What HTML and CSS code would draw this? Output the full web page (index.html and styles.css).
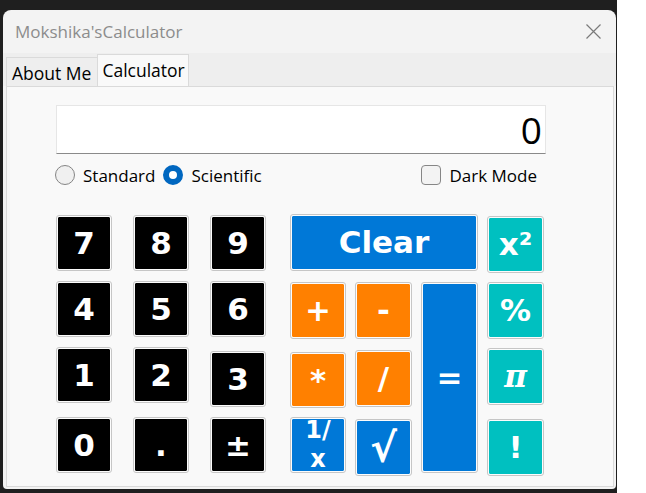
FILE: index.html
```html
<!DOCTYPE html>
<html>
<head>
<meta charset="utf-8">
<link rel="stylesheet" href="styles.css">
</head>
<body>
<div class="desktop">
  <div class="window">
    <div class="titlebar">
      <span class="title">Mokshika'sCalculator</span>
      <svg class="close" width="15" height="15" viewBox="0 0 15 15"><path d="M0.5 0.5 L14.5 14.5 M14.5 0.5 L0.5 14.5" stroke="#7a7a7a" stroke-width="1.2" fill="none"/></svg>
    </div>
    <div class="tabstrip">
      <div class="tab">About Me</div>
      <div class="tab active">Calculator</div>
    </div>
    <div class="panel">
      <div class="display">0</div>
      <div class="options">
        <label class="opt"><span class="radio"></span>Standard</label>
        <label class="opt"><span class="radio checked"></span>Scientific</label>
        <label class="opt dark"><span class="check"></span>Dark Mode</label>
      </div>
      <div class="keypad">
        <div class="digits">
          <div class="btn black">7</div>
          <div class="btn black">8</div>
          <div class="btn black">9</div>
          <div class="btn black">4</div>
          <div class="btn black">5</div>
          <div class="btn black">6</div>
          <div class="btn black">1</div>
          <div class="btn black">2</div>
          <div class="btn black low">3</div>
          <div class="btn black">0</div>
          <div class="btn black">.</div>
          <div class="btn black">±</div>
        </div>
        <div class="ops">
          <div class="btn blue clear">Clear</div>
          <div class="btn teal c4 r1 n2">x²</div>
          <div class="btn orange c1 r2">+</div>
          <div class="btn orange c2 r2">-</div>
          <div class="btn blue equals">=</div>
          <div class="btn teal c4 r2">%</div>
          <div class="btn orange c1 r3 n4 h56">*</div>
          <div class="btn orange c2 r3 n2">/</div>
          <div class="btn teal c4 r3 pi">π</div>
          <div class="btn blue c1 r4 h56 recip">1/<br>x</div>
          <div class="btn blue c2 r4 n2 sqrt">√</div>
          <div class="btn teal c4 r4 n2">!</div>
        </div>
      </div>
    </div>
  </div>
</div>
</body>
</html>
```
FILE: styles.css
```css
html, body {
  margin: 0;
  padding: 0;
  background: #ffffff;
}
body {
  width: 646px;
  height: 493px;
  overflow: hidden;
}
.desktop {
  width: 617px;
  height: 493px;
  background: #1f1f1f;
  padding: 10px 0 0 3px;
  box-sizing: border-box;
}
.window {
  width: 613px;
  height: 479px;
  background: #f3f3f3;
  border-radius: 8px 8px 4px 4px;
  overflow: hidden;
  display: flex;
  flex-direction: column;
  font-family: "Open Sans", "Noto Sans", sans-serif;
}
.titlebar {
  height: 43px;
  display: flex;
  align-items: center;
  justify-content: space-between;
  padding: 0 15px 0 12px;
  flex: none;
}
.title {
  color: #8c8c8c;
  font-size: 17px;
}
.close {
  display: block;
}
.tabstrip {
  height: 33px;
  background: #eeeeee;
  display: flex;
  align-items: flex-end;
  padding-left: 3px;
  flex: none;
}
.tab {
  height: 29px;
  box-sizing: border-box;
  border: 1px solid #dadada;
  border-bottom: none;
  border-right: none;
  padding: 2px 6px 0 5px;
  font-size: 17.5px;
  color: #000;
  display: flex;
  align-items: center;
}
.tab.active {
  height: 32px;
  background: #f9f9f9;
  border-right: 1px solid #dadada;
  padding: 0 3px 2px 4px;
}
.panel {
  flex: 1;
  margin: 0 2px 2px 3px;
  background: #f9f9f9;
  border: 1px solid #dadada;
  padding: 18px 0 0 48px;
}
.display {
  width: 490px;
  height: 49px;
  margin-left: 1px;
  box-sizing: border-box;
  background: #ffffff;
  border: 1px solid #e6e6e6;
  border-bottom: 1px solid #8a8a8a;
  display: flex;
  align-items: center;
  justify-content: flex-end;
  padding-right: 3px;
  font-size: 37px;
  color: #000;
}
.options {
  width: 491px;
  margin-top: 11px;
  height: 20px;
  display: flex;
  align-items: center;
  font-size: 17px;
  color: #000;
}
.opt {
  display: flex;
  align-items: center;
  gap: 8px;
  margin-right: 8px;
}
.opt.dark {
  margin-left: auto;
  margin-right: 9px;
}
.radio {
  width: 20px;
  height: 20px;
  box-sizing: border-box;
  border-radius: 50%;
  border: 1px solid #858585;
  background: #f0f0f0;
}
.radio.checked {
  border: 6px solid #0067c0;
  background: #ffffff;
}
.check {
  width: 20px;
  height: 20px;
  box-sizing: border-box;
  border-radius: 4px;
  border: 1px solid #868686;
  background: #f3f3f3;
}
.keypad {
  margin-top: 29px;
  display: flex;
  align-items: flex-start;
  gap: 24px;
  padding-left: 1px;
}
.digits {
  margin-top: 1px;
  display: grid;
  grid-template-columns: 56px 56px 56px;
  grid-template-rows: 56px 56px 60px 56px;
  column-gap: 21px;
  row-gap: 10px;
}
.digits .btn {
  height: 56px;
  align-self: start;
}
.digits .low {
  align-self: end;
}
.ops {
  display: grid;
  grid-template-columns: 56px 57px 57px 57px;
  grid-template-rows: 59px 57px 60px 59px;
  column-gap: 9px;
  row-gap: 9px;
}
.ops .btn {
  height: 57px;
  align-self: start;
}
.btn {
  box-sizing: border-box;
  border: 1px solid #c6c6c6;
  border-radius: 3px;
  padding: 1px;
  background-clip: content-box;
  box-shadow: inset 0 0 0 1px #fcfcfc;
  color: #ffffff;
  font-family: "DejaVu Sans", Verdana, sans-serif;
  font-weight: bold;
  font-size: 31px;
  display: flex;
  align-items: center;
  justify-content: center;
  text-align: center;
  line-height: 1;
}
.black { background-color: #000000; }
.blue { background-color: #0078d7; }
.orange { background-color: #ff8000; }
.teal { background-color: #00c0c0; }
.c1 { grid-column: 1; }
.c2 { grid-column: 2; }
.c4 { grid-column: 4; }
.r1 { grid-row: 1; }
.r2 { grid-row: 2; }
.r3 { grid-row: 3; }
.r4 { grid-row: 4; }
.n2 { margin-top: 2px; }
.n4 { margin-top: 4px; }
.ops .h56 { height: 56px; }
.ops .clear {
  grid-column: 1 / 4;
  grid-row: 1;
}
.ops .equals {
  grid-column: 3;
  grid-row: 2 / 5;
  height: 191px;
}
.pi {
  font-style: italic;
  font-family: "DejaVu Serif", serif;
}
.sqrt {
  font-size: 40px;
}
.recip {
  font-size: 24px;
  line-height: 29px;
}
```
